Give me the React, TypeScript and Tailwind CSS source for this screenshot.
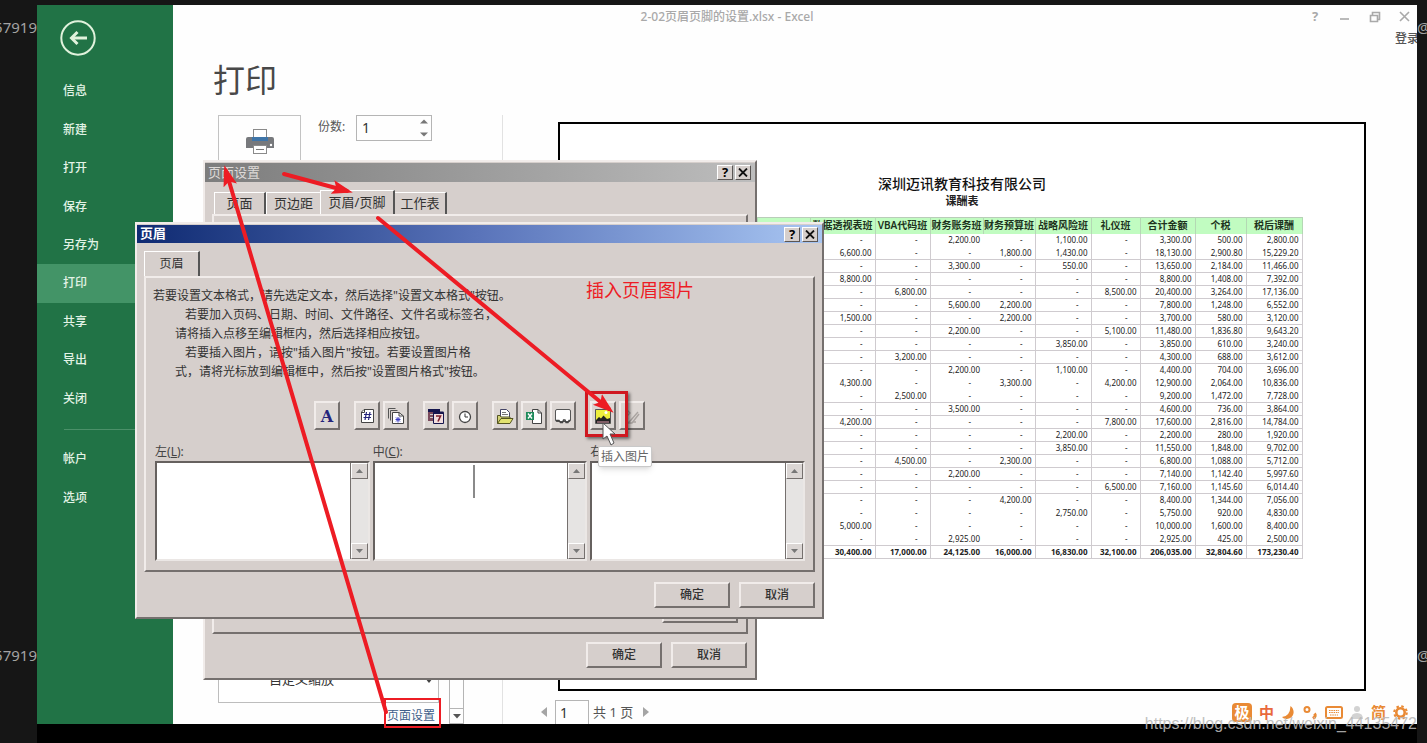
import React from "react";
import clsx from "clsx";

const mainMenu = ["信息", "新建", "打开", "保存", "另存为", "打印", "共享", "导出", "关闭"];
const accountMenu = ["帐户", "选项"];

const columns = [
  { title: "", width: 135 },
  { title: "", width: 53 },
  { title: "数据透视表班", width: 65 },
  { title: "VBA代码班", width: 55 },
  { title: "财务账务班", width: 53 },
  { title: "财务预算班", width: 52 },
  { title: "战略风险班", width: 56 },
  { title: "礼仪班", width: 49 },
  { title: "合计金额", width: 55 },
  { title: "个税", width: 51 },
  { title: "税后课酬", width: 56 },
];

const rows = [
  [0, 0, 2200, 0, 1100, 0, 3300, 500, 2800],
  [6600, 0, 0, 1800, 1430, 0, 18130, 2900.8, 15229.2],
  [0, 0, 3300, 0, 550, 0, 13650, 2184, 11466],
  [8800, 0, 0, 0, 0, 0, 8800, 1408, 7392],
  [0, 6800, 0, 0, 0, 8500, 20400, 3264, 17136],
  [0, 0, 5600, 2200, 0, 0, 7800, 1248, 6552],
  [1500, 0, 0, 2200, 0, 0, 3700, 580, 3120],
  [0, 0, 2200, 0, 0, 5100, 11480, 1836.8, 9643.2],
  [0, 0, 0, 0, 3850, 0, 3850, 610, 3240],
  [0, 3200, 0, 0, 0, 0, 4300, 688, 3612],
  [0, 0, 2200, 0, 1100, 0, 4400, 704, 3696],
  [4300, 0, 0, 3300, 0, 4200, 12900, 2064, 10836],
  [0, 2500, 0, 0, 0, 0, 9200, 1472, 7728],
  [0, 0, 3500, 0, 0, 0, 4600, 736, 3864],
  [4200, 0, 0, 0, 0, 7800, 17600, 2816, 14784],
  [0, 0, 0, 0, 2200, 0, 2200, 280, 1920],
  [0, 0, 0, 0, 3850, 0, 11550, 1848, 9702],
  [0, 4500, 0, 2300, 0, 0, 6800, 1088, 5712],
  [0, 0, 2200, 0, 0, 0, 7140, 1142.4, 5997.6],
  [0, 0, 0, 0, 0, 6500, 7160, 1145.6, 6014.4],
  [0, 0, 0, 4200, 0, 0, 8400, 1344, 7056],
  [0, 0, 0, 0, 2750, 0, 5750, 920, 4830],
  [5000, 0, 0, 0, 0, 0, 10000, 1600, 8400],
  [0, 0, 2925, 0, 0, 0, 2925, 425, 2500],
];

const totals = [30400, 17000, 24125, 16000, 16830, 32100, 206035, 32804.6, 173230.4];

// rows printed without a rule under them
const openRows = [0, 10, 11, 20, 21, 22];

const money = (n: number) =>
  n.toLocaleString("en-US", { minimumFractionDigits: 2, maximumFractionDigits: 2 });

const raised = "border-2 border-t-[#f1ecea] border-l-[#f1ecea] border-r-[#75706e] border-b-[#75706e]";

const Sidebar = () => (
  <nav className="w-[136px] shrink-0 bg-[#217346] text-xs font-medium text-[#e3f3e6]">
    <button aria-label="返回" className="mt-[15px] ml-[23px] block">
      <svg width="36" height="36" viewBox="0 0 36 36" fill="none" stroke="#e0f2dc">
        <circle cx="18" cy="18" r="16.7" strokeWidth="2" />
        <path d="M27 18H12" strokeWidth="3" />
        <path d="M17.5 12L11.5 18L17.5 24" strokeWidth="3" />
      </svg>
    </button>
    <div className="mt-4 flex h-[346px] flex-col">
      {mainMenu.map((item) => (
        <a
          key={item}
          href="#"
          className={clsx("flex flex-1 items-center pl-[26px]", item === "打印" && "bg-[#439467]")}
        >
          {item}
        </a>
      ))}
    </div>
    <div className="mt-[11px] ml-[27px] border-t border-[#4b9069]" />
    <div className="mt-[10px] flex h-[77px] flex-col">
      {accountMenu.map((item) => (
        <a key={item} href="#" className="flex flex-1 items-center pl-[26px]">
          {item}
        </a>
      ))}
    </div>
  </nav>
);

const PrinterIcon = () => (
  <svg width="30" height="28" viewBox="0 0 30 28">
    <rect x="8.5" y="1.5" width="13" height="11" fill="#fff" stroke="#8a8a8a" />
    <path d="M1 11q0-2 2-2h4v4h16V9h4q2 0 2 2v9H1z" fill="#77797c" />
    <rect x="7" y="9" width="16" height="4" fill="#3f75a8" />
    <circle cx="26" cy="17" r="1.2" fill="#fff" />
    <rect x="8.5" y="17.5" width="13" height="8" fill="#fff" stroke="#8a8a8a" />
    <path d="M11 21.5h8" stroke="#777" />
  </svg>
);

const Settings = () => (
  <div className="flex w-[330px] shrink-0 flex-col border-r border-[#e2e2e2] pl-[45px]">
    <div className="flex items-start">
      <button aria-label="打印" className="flex h-[83px] w-[83px] justify-center border border-[#c3c3c3] pt-3">
        <PrinterIcon />
      </button>
      <label htmlFor="copies" className="ml-[17px] w-[38px] text-xs leading-6 text-[#555]">
        份数:
      </label>
      <div className="flex h-[26px] w-[76px] items-center border border-[#b5b5b5]">
        <input id="copies" defaultValue="1" className="w-full min-w-0 flex-1 pl-[5px] text-sm text-[#333] outline-none" />
        <svg width="14" height="22" viewBox="0 0 14 22" fill="#777">
          <path d="M3 6.500L7 2.500L11 6.500zM3 15.500L7 19.500L11 15.500z" />
        </svg>
      </div>
    </div>
    <div className="mt-auto flex">
      <div className="w-[221px]">
        <div className="relative">
          <select
            aria-label="缩放"
            className="block h-[46px] w-full appearance-none border border-[#bdbdbd] bg-white pl-[50px] text-[13px] text-[#333]"
          >
            <option>自定义缩放</option>
          </select>
          <svg className="absolute top-[21px] right-[6px]" width="8" height="6" viewBox="0 0 8 6" fill="#444">
            <path d="M0 0H8L4 5z" />
          </svg>
        </div>
        <a href="#" className="block h-[21px] pr-1 text-right text-xs leading-[25px] text-[#3f5f8a]">
          页面设置
        </a>
      </div>
      <div className="ml-[10px] flex w-[15px] flex-col border border-[#b5b5b5]">
        <div className="flex-1" />
        <div className="flex h-[15px] items-center justify-center border-t border-[#b5b5b5]">
          <svg width="8" height="5" viewBox="0 0 8 5" fill="#555">
            <path d="M0 0H8L4 4.500z" />
          </svg>
        </div>
      </div>
    </div>
  </div>
);

const CourseTable = () => (
  <table className="mx-auto mt-2 w-[680px] table-fixed border-collapse text-[8px] text-[#222]">
    <colgroup>
      {columns.map((col, i) => (
        <col key={i} style={{ width: col.width }} />
      ))}
    </colgroup>
    <thead>
      <tr className="h-4 border-t border-[#b9cdb9] bg-[#c1fcc1]">
        {columns.map((col, i) => (
          <th
            key={i}
            className="border-x border-[#b4d8b4] p-0 text-[10px] leading-[15px] font-semibold whitespace-nowrap text-[#1d331d]"
          >
            {col.title}
          </th>
        ))}
      </tr>
    </thead>
    <tbody>
      {rows.map((row, r) => (
        <tr key={r} className={clsx("h-[13px]", !openRows.includes(r) && "border-b border-[#cfcbcf]")}>
          <td className="p-0" />
          <td className="p-0" />
          {row.map((n, c) => (
            <td
              key={c}
              className={clsx(
                "p-0 text-right leading-3",
                n ? "pr-[3px]" : "pr-3",
                c !== 2 && "border-r border-[#cfcbcf]"
              )}
            >
              {n ? money(n) : "-"}
            </td>
          ))}
        </tr>
      ))}
    </tbody>
    <tfoot>
      <tr className="h-[13px] border-b border-[#cfcbcf] font-bold">
        <td className="p-0" />
        <td className="p-0" />
        {totals.map((n, c) => (
          <td
            key={c}
            className={clsx("p-0 pr-[3px] text-right leading-3", c !== 2 && "border-r border-[#cfcbcf]")}
          >
            {money(n)}
          </td>
        ))}
      </tr>
    </tfoot>
  </table>
);

const Preview = () => (
  <div className="flex min-w-0 flex-1 flex-col pt-[7px] pr-[51px] pl-[55px]">
    <div className="flex-1 border-2 border-black bg-white pt-[51px]">
      <h2 className="text-center text-sm leading-[18px] font-medium text-[#111]">深圳迈讯教育科技有限公司</h2>
      <h3 className="text-center text-[11px] leading-4 font-bold text-[#222]">课酬表</h3>
      <CourseTable />
    </div>
    <div className="-ml-[18px] flex h-[33px] items-end text-xs leading-6 text-[#555]">
      <button aria-label="上一页" className="flex h-6 w-[15px] items-center">
        <svg width="7" height="10" viewBox="0 0 7 10" fill="#a5a5a5">
          <path d="M7 0V10L1 5z" />
        </svg>
      </button>
      <input
        aria-label="页码"
        defaultValue="1"
        className="h-6 w-[34px] border border-b-0 border-[#b5b5b5] pl-1 text-sm text-[#333] outline-none"
      />
      <span className="ml-1 text-[13px]">共 1 页</span>
      <button aria-label="下一页" className="ml-[10px] flex h-6 items-center">
        <svg width="7" height="10" viewBox="0 0 7 10" fill="#a5a5a5">
          <path d="M0 0V10L6 5z" />
        </svg>
      </button>
    </div>
  </div>
);

const TitleButtons = () => (
  <div className="flex gap-[2px]">
    <button className="flex h-[15px] w-4 items-center justify-center border border-t-white border-l-white border-r-[#5a5654] border-b-[#5a5654] bg-[#d6cfcc] text-[13px] leading-none font-bold text-black">
      ?
    </button>
    <button
      aria-label="关闭"
      className="flex h-[15px] w-4 items-center justify-center border border-t-white border-l-white border-r-[#5a5654] border-b-[#5a5654] bg-[#d6cfcc]"
    >
      <svg width="10" height="9" viewBox="0 0 10 9" stroke="#111" strokeWidth="1.800">
        <path d="M1 .5L9 8.500M9 .5L1 8.500" />
      </svg>
    </button>
  </div>
);

const DialogButton = ({ children }: { children: React.ReactNode }) => (
  <button className={`h-[26px] w-[76px] bg-[#d6cfcc] text-xs font-medium text-[#333] ${raised}`}>{children}</button>
);

const PageSetupDialog = () => (
  <div className={`absolute top-[160px] left-[203px] flex h-[520px] w-[554px] flex-col bg-[#d6cfcc] ${raised}`}>
    <div className="mt-px flex h-[19px] items-center justify-between bg-linear-to-r from-[#7d7d7d] to-[#bdbdbd] pr-1 pl-[3px] text-[13px] text-[#dedad8]">
      页面设置
      <TitleButtons />
    </div>
    <div className="mt-2 flex items-end pl-[9px] text-[13px] text-[#333]">
      <button className="h-[22px] w-[52px] border-t border-r-2 border-l border-t-white border-r-[#555] border-l-white">页面</button>
      <button className="h-[22px] w-[54px] border-t border-l border-white">页边距</button>
      <button className="h-6 w-[75px] border-t border-r-2 border-l border-t-white border-r-[#555] border-l-white">页眉/页脚</button>
      <button className="h-[22px] w-[52px] border-t border-r-2 border-t-white border-r-[#555]">工作表</button>
    </div>
    <div className={`mx-[7px] flex flex-1 items-end justify-end pr-2 pb-[9px] ${raised}`}>
      <div className={`h-[26px] w-[76px] ${raised}`} />
    </div>
    <div className="mt-2 flex justify-end gap-[9px] pr-2 pb-[10px]">
      <DialogButton>确定</DialogButton>
      <DialogButton>取消</DialogButton>
    </div>
  </div>
);

const toolGroups = [
  [
    {
      name: "设置文本格式",
      icon: (
        <text x="10" y="16" textAnchor="middle" fontSize="16" fontWeight="700" fill="#24247c" fontFamily="DejaVu Serif">
          A
        </text>
      ),
    },
  ],
  [
    {
      name: "插入页码",
      icon: (
        <>
          <path d="M7 3.500H16.500V16.500H4.500V6z" fill="#fff" stroke="#444" />
          <path d="M4.500 6.500H7.500V3.500" fill="none" stroke="#444" />
          <path d="M9.500 6L8 14M13 6L11.500 14M7 8.500H14.500M6.500 11.500H14" stroke="#24247c" strokeWidth="1.200" />
        </>
      ),
    },
    {
      name: "插入页数",
      icon: (
        <>
          <path d="M2.500 12.500V2.500H9.500M4.500 14.500V4.500H11.500" fill="none" stroke="#555" />
          <path d="M6.500 6.500H13L17.500 10V17.500H6.500z" fill="#fff" stroke="#444" />
          <path d="M13 6.500V10H17.500" fill="none" stroke="#444" />
          <path d="M12 11V16.500M9.500 13.500H14.500M10 11.500L14 15.500M14 11.500L10 15.500" stroke="#3b3bc4" />
        </>
      ),
    },
  ],
  [
    {
      name: "插入日期",
      icon: (
        <>
          <path d="M2 3H14V15H2z" fill="#7a4a5c" />
          <path d="M2 3H14V6H2z" fill="#15154d" />
          <path d="M4 8.500H7M4 11.500H7" stroke="#ccc" />
          <path d="M7.500 6.500H17.500V17.500H7.500z" fill="#f2dede" stroke="#15154d" />
          <path d="M7.500 5.500H17.500V8H7.500z" fill="#15154d" />
          <path d="M10 10H14.500L12 15.500" fill="none" stroke="#7d1f2c" strokeWidth="1.600" />
        </>
      ),
    },
    {
      name: "插入时间",
      icon: (
        <>
          <circle cx="10" cy="11" r="5.500" fill="#fff" stroke="#444" strokeWidth="1.300" />
          <path d="M10 7.500V11H13" fill="none" stroke="#333" />
        </>
      ),
    },
  ],
  [
    {
      name: "插入文件路径",
      icon: (
        <>
          <path d="M5.500 11V3.500H11.500L14.500 6.500V11" fill="#fff" stroke="#446" />
          <path d="M7 6.500H11M7 8.500H13" stroke="#777" />
          <path d="M2.500 17.500V9.500H5L6 11H15V12" fill="#d3d377" stroke="#555522" />
          <path d="M2.500 17.500L6 12.500H18L15 17.500z" fill="#e3e36f" stroke="#555522" />
        </>
      ),
    },
    {
      name: "插入文件名",
      icon: (
        <>
          <path d="M8.500 3.500H14L17.500 7V17.500H8.500z" fill="#fff" stroke="#444" />
          <path d="M14 3.500V7H17.500" fill="none" stroke="#444" />
          <path d="M2 6H10V14H2z" fill="#1f8a5b" />
          <path d="M4 7.500L8 12.500M8 7.500L4 12.500" stroke="#fff" strokeWidth="1.400" />
        </>
      ),
    },
    {
      name: "插入数据表名称",
      icon: (
        <>
          <rect x="2.500" y="3.500" width="15" height="12" rx="1.500" fill="#fff" stroke="#555" />
          <path d="M3 14.500H6L7.500 16.500H9.500L10.500 14H12L13 16.500H15L16 14.500H17" fill="none" stroke="#444" strokeWidth="1.300" />
        </>
      ),
    },
  ],
  [
    {
      name: "插入图片",
      icon: (
        <>
          <path d="M2.500 3.500H17.500V17.500H2.500z" fill="#eeee3c" stroke="#555" />
          <path d="M3 14L6 11L8 12.500L10.500 9.500L14 13L17 12V17H3z" fill="#222" />
          <path d="M4 16H16" stroke="#d9a" />
          <circle cx="13" cy="6.500" r="1.500" fill="#fff" />
        </>
      ),
    },
    {
      name: "设置图片格式",
      icon: (
        <path
          d="M5 4L8 7L5 10M16 6L9 14L6 17H10L17 8M4 13L6 12M11 16H14"
          fill="none"
          stroke="#aaa4a1"
          strokeWidth="1.400"
        />
      ),
    },
  ],
];

const ScrollArrow = ({ d }: { d: string }) => (
  <div className="flex h-4 items-center justify-center border border-t-white border-l-white border-r-[#75706e] border-b-[#75706e] bg-[#dbd6d4]">
    <svg width="7" height="4" viewBox="0 0 7 4" fill="#777">
      <path d={d} />
    </svg>
  </div>
);

const Section = ({ id, label, hotkey, caret }: { id: string; label: string; hotkey: string; caret?: boolean }) => (
  <div className="min-w-0">
    <label htmlFor={id} className="block text-xs leading-[19px] text-[#444]">
      {label}(<span className="underline">{hotkey}</span>):
    </label>
    <div className="relative flex h-[100px] border-2 border-t-[#66615f] border-l-[#66615f] border-r-[#ebe7e5] border-b-[#ebe7e5] bg-white">
      <textarea id={id} className="min-w-0 flex-1 resize-none text-xs outline-none" />
      {caret && <div className="absolute top-[2px] left-[98px] h-[33px] w-[2px] bg-[#8a8a8a]" />}
      <div className="flex w-[18px] flex-col justify-between border-l border-[#75706e] bg-[#e6e4e3]">
        <ScrollArrow d="M0 4H7L3.500 0z" />
        <ScrollArrow d="M0 0H7L3.500 4z" />
      </div>
    </div>
  </div>
);

const HeaderDialog = () => (
  <div className={`absolute top-[222px] left-[135px] w-[689px] bg-[#d6cfcc] ${raised}`}>
    <div className="mt-px flex h-[18px] items-center justify-between bg-linear-to-r from-[#0f2a72] via-[#5a74ba] to-[#a9c6f2] pr-1 pl-[3px] text-[13px] font-bold text-white">
      页眉
      <TitleButtons />
    </div>
    <div className="mt-2 pl-[7px]">
      <button className="block h-[25px] w-[56px] border-t border-r-2 border-l border-t-white border-r-[#555] border-l-white text-xs text-[#333]">
        页眉
      </button>
    </div>
    <div className={`mx-[7px] pt-2 pr-2 pb-[9px] pl-[7px] ${raised}`}>
      <div className="text-xs leading-[19px] whitespace-nowrap text-[#333]">
        <p>若要设置文本格式，请先选定文本，然后选择"设置文本格式"按钮。</p>
        <p className="pl-8">若要加入页码、日期、时间、文件路径、文件名或标签名，</p>
        <p className="pl-[22px]">请将插入点移至编辑框内，然后选择相应按钮。</p>
        <p className="pl-8">若要插入图片，请按"插入图片"按钮。若要设置图片格</p>
        <p className="pl-[22px]">式，请将光标放到编辑框中，然后按"设置图片格式"按钮。</p>
      </div>
      <div className="mt-5 flex justify-center gap-[14px]">
        {toolGroups.map((group, g) => (
          <div key={g} className="flex gap-[3px]">
            {group.map((tool) => (
              <button
                key={tool.name}
                aria-label={tool.name}
                className={`flex h-[29px] w-[26px] items-center justify-center bg-[#dcd6d3] ${raised}`}
              >
                <svg width="20" height="20" viewBox="0 0 20 20">
                  {tool.icon}
                </svg>
              </button>
            ))}
          </div>
        ))}
      </div>
      <div className="mt-3 grid grid-cols-3 gap-[3px] pl-[2px]">
        <Section id="left" label="左" hotkey="L" />
        <Section id="center" label="中" hotkey="C" caret />
        <Section id="right" label="右" hotkey="R" />
      </div>
    </div>
    <div className="mt-[10px] flex justify-end gap-[9px] pr-[7px] pb-[9px]">
      <DialogButton>确定</DialogButton>
      <DialogButton>取消</DialogButton>
    </div>
  </div>
);

const arrows = ["M386 712L226 171", "M284 174L347 191", "M378 218L609 409"];

const Annotations = () => (
  <>
    <div className="absolute top-[446px] left-[598px] rounded-xs border border-[#c9c9c9] bg-white px-[2px] text-xs leading-[19px] text-[#666] shadow-md">
      插入图片
    </div>
    <div className="absolute top-[391px] left-[585px] h-[46px] w-[43px] border-[3px] border-[#cf1820] shadow-[2px_2px_3px_rgba(0,0,0,0.5)]" />
    <p className="absolute top-[276px] left-[586px] text-lg text-[#ed1c24]">插入页眉图片</p>
    <div className="absolute top-[698px] left-[384px] h-[30px] w-[57px] border-2 border-[#ed1c24]" />
    <svg className="pointer-events-none absolute top-0 left-0" width="1427" height="743" viewBox="0 0 1427 743">
      <defs>
        <marker
          id="head"
          markerUnits="userSpaceOnUse"
          markerWidth="24"
          markerHeight="20"
          refX="15"
          refY="8"
          orient="auto"
        >
          <path d="M0 1L21 8L0 15L4 8z" fill="#ed1c24" />
        </marker>
      </defs>
      <path
        d="M603 423V439L607 436L611 445L614 443L610 434H615z"
        fill="#fff"
        stroke="#555"
      />
      {arrows.map((d) => (
        <path key={d} d={d} stroke="#ed1c24" strokeWidth="4" strokeLinecap="round" markerEnd="url(#head)" />
      ))}
    </svg>
  </>
);

const ImeBar = () => (
  <div className="absolute right-[19px] bottom-[21px] flex items-center gap-[7px] text-[15px] leading-[19px] font-bold text-[#e98a35]">
    <span className="w-5 rounded-sm bg-[#e98a35] text-center text-white">极</span>
    <span className="text-[#e9683c]">中</span>
    <svg width="14" height="15" viewBox="0 0 14 15" fill="#e98a35">
      <path d="M9.500 1C15 5 13 14 5.500 14Q2.500 14 1 12Q9 11.500 9.500 1z" />
    </svg>
    <svg width="16" height="15" viewBox="0 0 16 15" fill="none" stroke="#e98a35" strokeWidth="2">
      <circle cx="5" cy="4.500" r="2.500" />
      <path d="M12.500 8.500Q14.500 11 11 13.500" strokeWidth="3" />
    </svg>
    <svg width="18" height="13" viewBox="0 0 18 13" fill="none" stroke="#e98a35">
      <rect x="1" y="1" width="16" height="11" rx="1.500" strokeWidth="2" />
      <path d="M4 4.500H14M4 6.500H14M5 9H13" strokeDasharray="1.500 .8" />
    </svg>
    <svg width="14" height="15" viewBox="0 0 14 15" fill="#d2d2d2">
      <circle cx="7" cy="4" r="3" />
      <path d="M1 14Q1 8 7 8Q13 8 13 14z" />
    </svg>
    <span>简</span>
    <svg width="15" height="15" viewBox="0 0 15 15" fill="none" stroke="#e98a35">
      <circle cx="7.500" cy="7.500" r="4.200" strokeWidth="2.600" />
      <circle cx="7.500" cy="7.500" r="6.300" strokeWidth="2" strokeDasharray="2.500 2.450" />
    </svg>
  </div>
);

const TopBar = () => (
  <>
    <div className="flex h-6 items-center text-[#a9a9a9]">
      <p className="flex-1 pr-4 text-center text-xs font-medium">2-02页眉页脚的设置.xlsx - Excel</p>
      <div className="flex w-[120px] items-center gap-[18px] pl-3">
        <button className="w-3 text-[13px] font-bold">?</button>
        {["M1 8H10", "M1.500 4.500H8.500V10.500H1.500zM3.500 4V1.500H10.500V8.500H9", "M1 1L10 10M10 1L1 10"].map((d, i) => (
          <button key={d} aria-label={["最小化", "还原", "关闭"][i]}>
            <svg width="12" height="12" viewBox="0 0 12 12" fill="none" stroke="#a9a9a9" strokeWidth="1.600">
              <path d={d} />
            </svg>
          </button>
        ))}
      </div>
    </div>
    <a href="#" className="block h-5 w-[22px] self-end overflow-hidden text-xs leading-5 font-medium whitespace-nowrap text-[#555]">
      登录
    </a>
  </>
);

export default function App() {
  return (
    <div className="relative flex min-h-screen overflow-hidden bg-[#161616] font-['Noto_Sans','Noto_Sans_CJK_SC',sans-serif]">
      <div className="relative w-[37px] shrink-0 overflow-hidden text-[15px] leading-5 text-[#a3a3a3]">
        <span className="absolute top-[17px] right-0">57919</span>
        <span className="absolute top-[645px] right-0">57919</span>
      </div>
      <div className="flex min-w-0 flex-1 flex-col pt-[5px]">
        <div className="flex flex-1 bg-[#fefefe]">
          <Sidebar />
          <main className="flex min-w-0 flex-1 flex-col">
            <TopBar />
            <h1 className="pl-10 text-[32px] leading-[62px] text-[#484848]">打印</h1>
            <div className="flex flex-1 pt-1">
              <Settings />
              <Preview />
            </div>
          </main>
        </div>
        <div className="h-[19px] bg-black" />
      </div>
      <div className="relative w-[10px] shrink-0 overflow-hidden text-[15px] leading-5 text-[#a3a3a3]">
        <span className="absolute top-[17px] left-0">@</span>
        <span className="absolute top-[645px] left-0">@</span>
      </div>
      <PageSetupDialog />
      <HeaderDialog />
      <ImeBar />
      <p className="absolute right-[10px] bottom-[9px] font-['Liberation_Sans',sans-serif] text-base leading-5 text-[#b8b8b8]/90">
        https://blog.csdn.net/weixin_44135472
      </p>
      <Annotations />
    </div>
  );
}
